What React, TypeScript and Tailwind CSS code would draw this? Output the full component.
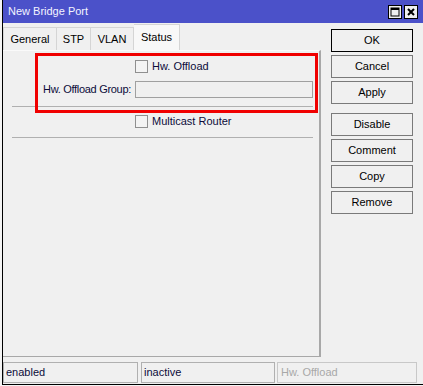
import React from "react";

const font = { fontFamily: '"Liberation Sans", Arial, sans-serif' };

function Checkbox() {
  return <div className="w-[13px] h-[13px] border border-[#8f8f8f] bg-[#f3f3f3] shrink-0" />;
}

function Btn({ label, focused }: { label: string; focused?: boolean }) {
  return (
    <div
      className={
        "h-[23px] w-[82px] flex items-center justify-center text-[11px] text-black bg-[#f0f0f0] border " +
        (focused ? "border-black" : "border-[#7a7a7a]")
      }
    >
      {label}
    </div>
  );
}

export default function App() {
  return (
    <div className="w-[423px] h-[386px] bg-[#f4f4f4] text-[11px]" style={font}>
      <div className="ml-[2px] w-[421px] h-[385px] border-l border-b border-black bg-[#f0f0f0] flex flex-col">
        {/* Title bar */}
        <div className="h-[23px] bg-[#4b51c9] flex items-start justify-between pl-[5px] pr-[5px] shrink-0">
          <span className="mt-[5px] text-[11px] text-[#f4f4ff] leading-[13px]">New Bridge Port</span>
          <div className="flex gap-[2px] mt-[5px]">
            <div className="w-[14px] h-[14px] bg-[#efefef] border border-black flex items-center justify-center">
              <svg width="10" height="10" viewBox="0 0 10 10">
                <rect x="1" y="1" width="8" height="8" fill="none" stroke="#000" strokeWidth="1" />
                <rect x="1" y="1" width="8" height="2" fill="#000" />
              </svg>
            </div>
            <div className="w-[14px] h-[14px] bg-[#efefef] border border-black flex items-center justify-center">
              <svg width="10" height="10" viewBox="0 0 10 10">
                <path d="M2 2 L8 8 M8 2 L2 8" stroke="#000" strokeWidth="2" />
              </svg>
            </div>
          </div>
        </div>

        {/* Body */}
        <div className="flex h-[338px] shrink-0">
          {/* left column */}
          <div className="w-[318px] flex flex-col">
            <div className="h-[27px] flex items-end">
              <div className="h-[23px] w-[54px] border border-[#d5d5d5] border-b-0 flex items-center justify-center text-black">General</div>
              <div className="h-[23px] w-[34px] border border-[#d5d5d5] border-b-0 border-l-0 flex items-center justify-center text-black">STP</div>
              <div className="h-[23px] w-[43px] border border-[#d5d5d5] border-b-0 border-l-0 flex items-center justify-center text-black">VLAN</div>
              <div className="h-[26px] w-[46px] border border-[#d5d5d5] border-b-0 border-l-0 bg-[#f8f8f8] flex items-start justify-center pt-[4px] text-black">Status</div>
            </div>
            <div className="relative h-[307px] border-r-2 border-b border-r-[#a8a8a8] border-b-[#a8a8a8] border-t border-t-[#fafafa]">
              <div className="pt-[9px]">
                <div className="flex items-center h-[13px]">
                  <div className="w-[132px]" />
                  <Checkbox />
                  <span className="ml-[4px] text-[#0c0c3a]">Hw. Offload</span>
                </div>
                <div className="flex items-center mt-[8px] h-[17px]">
                  <div className="w-[132px] pr-[4px] text-right text-[#0c0c3a] whitespace-nowrap tracking-[-0.3px]">Hw. Offload Group:</div>
                  <div className="w-[178px] h-[17px] border border-[#a0a0a0] bg-[#f0f0f0]" />
                </div>
                <div className="ml-[9px] mt-[8px] w-[301px] h-px bg-[#b0b0b0]" />
                <div className="flex items-center mt-[8px] h-[13px]">
                  <div className="w-[132px]" />
                  <Checkbox />
                  <span className="ml-[4px] text-[#0c0c3a]">Multicast Router</span>
                </div>
                <div className="ml-[9px] mt-[9px] w-[301px] h-px bg-[#b0b0b0]" />
              </div>
              {/* red annotation box */}
              <div className="absolute left-[32px] top-[2px] w-[283px] h-[60px] border-[3px] border-[#f00000]" />
            </div>
          </div>
          {/* right column buttons */}
          <div className="ml-[10px] pt-[6px] flex flex-col gap-[3px]">
            <Btn label="OK" focused />
            <Btn label="Cancel" />
            <Btn label="Apply" />
            <div className="h-[3px]" />
            <Btn label="Disable" />
            <Btn label="Comment" />
            <Btn label="Copy" />
            <Btn label="Remove" />
          </div>
        </div>

        {/* Status bar */}
        <div className="flex pt-[1px] h-[23px]">
          <div className="w-[135px] h-[21px] border border-[#b0b0b0] flex items-center pl-[2px] text-[#0c0c3a]">enabled</div>
          <div className="ml-[3px] w-[134px] h-[21px] border border-[#b0b0b0] flex items-center pl-[2px] text-[#0c0c3a]">inactive</div>
          <div className="ml-[2px] w-[140px] h-[21px] border border-[#c8c8c8] flex items-center pl-[3px] text-[#a8a8a8]">Hw. Offload</div>
        </div>
      </div>
    </div>
  );
}
